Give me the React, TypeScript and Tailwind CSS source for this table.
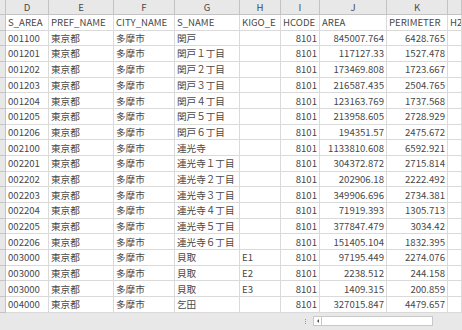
import React from "react";

type Row = [string, string, string, string, string, string, string, string];

const rows: Row[] = [
  ["001100", "東京都", "多摩市", "関戸", "", "8101", "845007.764", "6428.765"],
  ["001201", "東京都", "多摩市", "関戸１丁目", "", "8101", "117127.33", "1527.478"],
  ["001202", "東京都", "多摩市", "関戸２丁目", "", "8101", "173469.808", "1723.667"],
  ["001203", "東京都", "多摩市", "関戸３丁目", "", "8101", "216587.435", "2504.765"],
  ["001204", "東京都", "多摩市", "関戸４丁目", "", "8101", "123163.769", "1737.568"],
  ["001205", "東京都", "多摩市", "関戸５丁目", "", "8101", "213958.605", "2728.929"],
  ["001206", "東京都", "多摩市", "関戸６丁目", "", "8101", "194351.57", "2475.672"],
  ["002100", "東京都", "多摩市", "連光寺", "", "8101", "1133810.608", "6592.921"],
  ["002201", "東京都", "多摩市", "連光寺１丁目", "", "8101", "304372.872", "2715.814"],
  ["002202", "東京都", "多摩市", "連光寺２丁目", "", "8101", "202906.18", "2222.492"],
  ["002203", "東京都", "多摩市", "連光寺３丁目", "", "8101", "349906.696", "2734.381"],
  ["002204", "東京都", "多摩市", "連光寺４丁目", "", "8101", "71919.393", "1305.713"],
  ["002205", "東京都", "多摩市", "連光寺５丁目", "", "8101", "377847.479", "3034.42"],
  ["002206", "東京都", "多摩市", "連光寺６丁目", "", "8101", "151405.104", "1832.395"],
  ["003000", "東京都", "多摩市", "貝取", "E1", "8101", "97195.449", "2274.076"],
  ["003000", "東京都", "多摩市", "貝取", "E2", "8101", "2238.512", "244.158"],
  ["003000", "東京都", "多摩市", "貝取", "E3", "8101", "1409.315", "200.859"],
  ["004000", "東京都", "多摩市", "乞田", "", "8101", "327015.847", "4479.657"],
];

const cols = "grid grid-cols-[6px_43px_65px_61px_65px_41px_39px_67px_61px_1fr]";
const cell = "h-[15.68px] border-r border-b border-[#dadada] px-[2px] flex items-center overflow-hidden whitespace-nowrap";
const head = "h-[15px] border-r border-b border-[#c4c4c4] bg-[#e8e8e8] flex items-center justify-center overflow-hidden";

export default function App() {
  const letters = ["", "D", "E", "F", "G", "H", "I", "J", "K", ""];
  const names = ["S_AREA", "PREF_NAME", "CITY_NAME", "S_NAME", "KIGO_E", "HCODE", "AREA", "PERIMETER", "H27"];
  return (
    <div
      className="w-[462px] h-[330px] overflow-hidden bg-white flex flex-col text-[9.6px] text-[#484848]"
      style={{ fontFamily: '"Noto Sans CJK JP", "Noto Sans", sans-serif' }}
    >
      <div className={cols}>
        {letters.map((l, i) => (
          <div key={i} className={head}>{l}</div>
        ))}
      </div>
      <div className={cols}>
        <div className="h-[15.68px] border-r border-b border-[#c4c4c4] bg-[#e8e8e8]" />
        {names.map((n, i) => (
          <div key={i} className={cell}>{n}</div>
        ))}
      </div>
      {rows.map((r, ri) => (
        <div key={ri} className={cols}>
          <div className="h-[15.68px] border-r border-b border-[#c4c4c4] bg-[#e8e8e8]" />
          {r.map((v, ci) => (
            <div key={ci} className={`${cell} ${ci >= 5 ? "justify-end" : ""}`}>{v}</div>
          ))}
          <div className={cell} />
        </div>
      ))}
      <div className="flex-1 bg-[#e8e8e8] flex items-center">
        <div className="w-[303px]" />
        <div className="w-[4px] flex flex-col items-center gap-[1px]">
          <div className="w-[1px] h-[1px] bg-[#9a9a9a]" />
          <div className="w-[1px] h-[1px] bg-[#9a9a9a]" />
          <div className="w-[1px] h-[1px] bg-[#9a9a9a]" />
        </div>
        <div className="w-[6px]" />
        <div className="w-[9px] h-[10px] bg-white border border-[#c8c8c8] flex items-center justify-center">
          <div className="w-0 h-0 border-y-[2px] border-y-transparent border-r-[2px] border-r-[#555]" />
        </div>
        <div className="w-[111px] h-[10px] bg-white border border-[#c8c8c8] border-l-0" />
      </div>
    </div>
  );
}
